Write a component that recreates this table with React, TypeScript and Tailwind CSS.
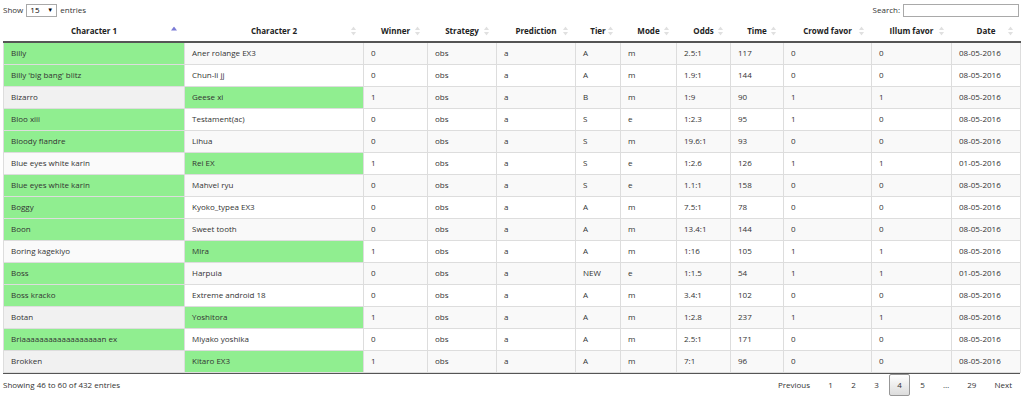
import React from "react";

type Row = [string, string, string, string, string, string, string, string, string, string, string, string];

const rows: Row[] = [
  ["Billy", "Aner rolange EX3", "0", "obs", "a", "A", "m", "2.5:1", "117", "0", "0", "08-05-2016"],
  ["Billy 'big bang' blitz", "Chun-li jj", "0", "obs", "a", "A", "m", "1.9:1", "144", "0", "0", "08-05-2016"],
  ["Bizarro", "Geese xi", "1", "obs", "a", "B", "m", "1:9", "90", "1", "1", "08-05-2016"],
  ["Bloo xiii", "Testament(ac)", "0", "obs", "a", "S", "e", "1:2.3", "95", "1", "0", "08-05-2016"],
  ["Bloody flandre", "Lihua", "0", "obs", "a", "S", "m", "19.6:1", "93", "0", "0", "08-05-2016"],
  ["Blue eyes white karin", "Rei EX", "1", "obs", "a", "S", "e", "1:2.6", "126", "1", "1", "01-05-2016"],
  ["Blue eyes white karin", "Mahvel ryu", "0", "obs", "a", "S", "e", "1.1:1", "158", "0", "0", "08-05-2016"],
  ["Boggy", "Kyoko_typea EX3", "0", "obs", "a", "A", "m", "7.5:1", "78", "0", "0", "08-05-2016"],
  ["Boon", "Sweet tooth", "0", "obs", "a", "A", "m", "13.4:1", "144", "0", "0", "08-05-2016"],
  ["Boring kagekiyo", "Mira", "1", "obs", "a", "A", "m", "1:16", "105", "1", "1", "08-05-2016"],
  ["Boss", "Harpuia", "0", "obs", "a", "NEW", "e", "1:1.5", "54", "1", "1", "01-05-2016"],
  ["Boss kracko", "Extreme android 18", "0", "obs", "a", "A", "m", "3.4:1", "102", "0", "0", "08-05-2016"],
  ["Botan", "Yoshitora", "1", "obs", "a", "A", "m", "1:2.8", "237", "1", "1", "08-05-2016"],
  ["Briaaaaaaaaaaaaaaaaaan ex", "Miyako yoshika", "0", "obs", "a", "A", "m", "2.5:1", "171", "0", "0", "08-05-2016"],
  ["Brokken", "Kitaro EX3", "1", "obs", "a", "A", "m", "7:1", "96", "0", "0", "08-05-2016"],
];

const headers = [
  "Character 1",
  "Character 2",
  "Winner",
  "Strategy",
  "Prediction",
  "Tier",
  "Mode",
  "Odds",
  "Time",
  "Crowd favor",
  "Illum favor",
  "Date",
];

const widths = [181, 179, 64, 69, 79, 45, 56, 54, 53, 88, 80, 69];

function SortBoth() {
  return (
    <svg width="5" height="9" viewBox="0 0 5 9" className="block">
      <path d="M2.5 0 L5 3.5 L0 3.5 Z" fill="#e0e0e0" />
      <path d="M2.5 9 L5 5.5 L0 5.5 Z" fill="#e0e0e0" />
    </svg>
  );
}

function SortAsc() {
  return (
    <svg width="6" height="9" viewBox="0 0 6 9" className="block">
      <path d="M3 0 L6 4 L0 4 Z" fill="#7b7bd6" />
    </svg>
  );
}

export default function App() {
  return (
    <div
      className="w-[1024px] h-[399px] bg-white text-[#333] overflow-hidden"
      style={{ fontFamily: '"Open Sans", "Noto Sans", sans-serif' }}
    >
      <div className="flex items-center justify-between pl-[3px] pr-[5px] h-[20px] text-[8px]">
        <div className="flex items-center gap-[3px]">
          <span>Show</span>
          <span className="flex items-center justify-between w-[31px] h-[13px] border border-[#a9a9a9] bg-white px-[3px] text-[8px] text-black">
            <span>15</span>
            <span className="text-[6px]">▼</span>
          </span>
          <span>entries</span>
        </div>
        <div className="flex items-center gap-[3px]">
          <span>Search:</span>
          <span className="w-[116px] h-[13px] border border-[#a9a9a9] bg-white" />
        </div>
      </div>

      <div className="pl-[3px]">
        <table className="table-fixed border-collapse text-[8px]" style={{ width: 1017 }}>
          <colgroup>
            {widths.map((w, i) => (
              <col key={i} style={{ width: w }} />
            ))}
          </colgroup>
          <thead>
            <tr className="h-[22px] border-b-2 border-[#555]">
              {headers.map((h, i) => (
                <th key={h} className="relative p-0 font-bold text-center text-[#222]">
                  <span>{h}</span>
                  <span className="absolute right-[8px] top-1/2 -translate-y-1/2">
                    {i === 0 ? <SortAsc /> : <SortBoth />}
                  </span>
                </th>
              ))}
            </tr>
          </thead>
          <tbody>
            {rows.map((r, ri) => {
              const odd = ri % 2 === 0;
              const c2wins = r[2] === "1";
              return (
                <tr key={ri} className={odd ? "bg-[#f9f9f9]" : "bg-white"}>
                  {r.map((c, ci) => {
                    let bg = "";
                    if (ci === 0) bg = c2wins ? (odd ? "bg-[#f1f1f1]" : "bg-[#fafafa]") : "bg-[#90ee90]";
                    if (ci === 1 && c2wins) bg = "bg-[#90ee90]";
                    return (
                      <td
                        key={ci}
                        className={`h-[22px] py-0 pl-[7px] pr-[4px] border border-[#dddddd] whitespace-nowrap overflow-hidden ${bg} ${
                          ri === 0 ? "border-t-0" : ""
                        }`}
                      >
                        {c}
                      </td>
                    );
                  })}
                </tr>
              );
            })}
          </tbody>
        </table>
        <div className="border-t border-[#555]" style={{ width: 1017 }} />
      </div>

      <div className="flex items-center justify-between pl-[3px] pr-[4px] h-[22px] text-[8px]">
        <span>Showing 46 to 60 of 432 entries</span>
        <div className="flex items-center gap-[2px]">
          <span className="px-[8px] py-[5px]">Previous</span>
          <span className="px-[8px] py-[5px] min-w-[21px] text-center">1</span>
          <span className="px-[8px] py-[5px] min-w-[21px] text-center">2</span>
          <span className="px-[8px] py-[5px] min-w-[21px] text-center">3</span>
          <span className="px-[7px] py-[4px] min-w-[21px] text-center border border-[#979797] rounded-[2px] bg-gradient-to-b from-white to-[#dcdcdc]">
            4
          </span>
          <span className="px-[8px] py-[5px] min-w-[21px] text-center">5</span>
          <span className="px-[8px] py-[5px]">…</span>
          <span className="px-[8px] py-[5px] min-w-[21px] text-center">29</span>
          <span className="px-[8px] py-[5px]">Next</span>
        </div>
      </div>
    </div>
  );
}
